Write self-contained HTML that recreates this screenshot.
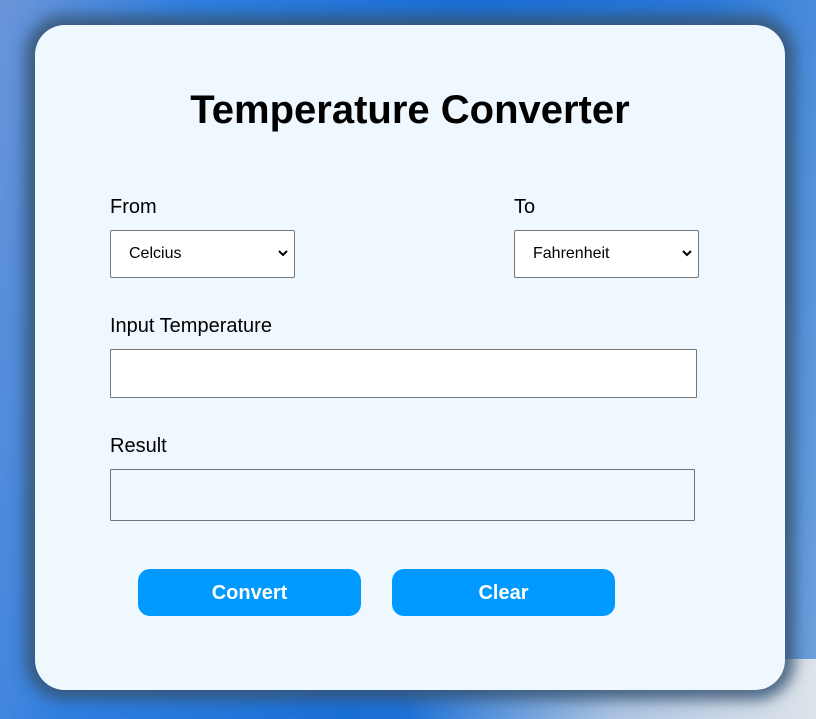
<!DOCTYPE html>
<html><head><style>
*{box-sizing:border-box;margin:0;padding:0}
body{width:816px;height:719px;overflow:hidden;font-family:"Liberation Sans",Arial,sans-serif;
background:linear-gradient(100deg,#6b95d8 0%,#2f7fe0 20%,#1a6fd6 50%,#2a78d8 75%,#6fa2dc 100%);position:relative}
.bg2{position:absolute;left:0;bottom:0;width:816px;height:60px;background:linear-gradient(90deg,transparent 50%,rgba(200,212,228,.8) 75%,#dde3ea 100%)}
.card{position:absolute;left:35px;top:25px;width:750px;height:665px;background:#f0f8ff;border-radius:30px;
box-shadow:0 0 14px 10px rgba(55,85,115,.85)}
h1{position:absolute;left:0;width:100%;top:63px;text-align:center;font-size:40px;font-weight:bold;color:#000}
.lbl{position:absolute;font-size:20px;color:#000}
.sel{position:absolute;width:185px;height:48px;background:#fff;border:1px solid #767676;border-radius:2px;font-size:16px;padding:14px 0 0 18px}
.sel svg{position:absolute;right:6px;top:19px}
.box{position:absolute;border:1px solid #767676;border-radius:1px}
.btn{position:absolute;top:544px;width:223px;height:47px;background:#0099ff;border-radius:12px;color:#fff;font-weight:bold;font-size:20px;text-align:center;line-height:49px}
</style></head><body>
<div class="bg2"></div>
<div class="card">
<h1>Temperature Converter</h1>
<div class="lbl" style="left:75px;top:171px">From</div>
<div class="lbl" style="left:479px;top:171px">To</div>
<div class="sel" style="left:75px;top:205px">Celcius<svg width="10" height="7" viewBox="0 0 10 7"><path d="M1 1L5 5L9 1" stroke="#000" stroke-width="2" fill="none"/></svg></div>
<div class="sel" style="left:479px;top:205px">Fahrenheit<svg width="10" height="7" viewBox="0 0 10 7"><path d="M1 1L5 5L9 1" stroke="#000" stroke-width="2" fill="none"/></svg></div>
<div class="lbl" style="left:75px;top:290px">Input Temperature</div>
<div class="box" style="left:75px;top:324px;width:587px;height:49px;background:#fff"></div>
<div class="lbl" style="left:75px;top:410px">Result</div>
<div class="box" style="left:75px;top:444px;width:585px;height:52px;background:#f0f8ff"></div>
<div class="btn" style="left:103px">Convert</div>
<div class="btn" style="left:357px">Clear</div>
</div>
</body></html>
